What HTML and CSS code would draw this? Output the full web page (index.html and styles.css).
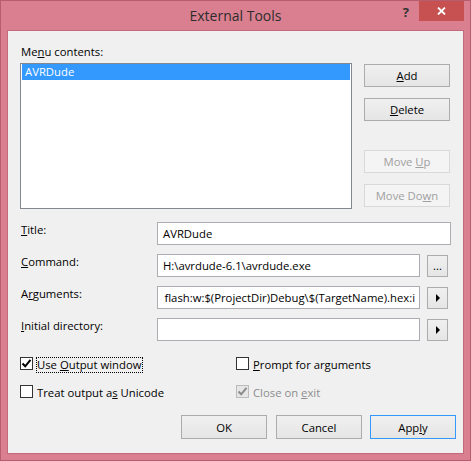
FILE: index.html
```html
<!DOCTYPE html>
<html lang="en">
<head>
  <meta charset="UTF-8">
  <title>External Tools</title>
  <link rel="stylesheet" href="styles.css">
</head>
<body>
  <div class="window">
    <!-- Title bar -->
    <div class="titlebar">
      <span></span>
      <div class="caption">External Tools</div>
      <div class="controls">
        <span class="help">?</span>
        <span class="close">
          <svg width="9" height="8" viewBox="0 0 9 8"><path d="M1 0.5 L8 7.5 M8 0.5 L1 7.5" stroke="#fff" stroke-width="1.8"/></svg>
        </span>
      </div>
    </div>

    <div class="client">
      <div class="list-label">Me<u>n</u>u contents:</div>

      <div class="list-row">
        <div class="listbox">
          <div class="list-item selected">AVRDude</div>
        </div>
        <div class="side-buttons">
          <button class="btn"><u>A</u>dd</button>
          <button class="btn"><u>D</u>elete</button>
          <button class="btn disabled move-up">Move <u>U</u>p</button>
          <button class="btn disabled">Move Do<u>w</u>n</button>
        </div>
      </div>

      <!-- Tool fields -->
      <div class="fields">
        <div class="field">
          <label><u>T</u>itle:</label>
          <div class="textbox wide">AVRDude</div>
        </div>
        <div class="field">
          <label><u>C</u>ommand:</label>
          <div class="textbox">H:\avrdude-6.1\avrdude.exe</div>
          <button class="btn small">...</button>
        </div>
        <div class="field">
          <label>A<u>r</u>guments:</label>
          <div class="textbox scrolled"><span>flash:w:$(ProjectDir)Debug\$(TargetName).hex:i</span></div>
          <button class="btn small"><span class="arrow"></span></button>
        </div>
        <div class="field">
          <label><u>I</u>nitial directory:</label>
          <div class="textbox"></div>
          <button class="btn small"><span class="arrow"></span></button>
        </div>
      </div>

      <!-- Options -->
      <div class="options">
        <div class="check">
          <span class="box"><svg width="11" height="11" viewBox="0 0 11 11"><path d="M1.5 5.5 L4.2 8.3 L9.5 1.8" fill="none" stroke="#000" stroke-width="2"/></svg></span>
          <span class="check-label focused">Use <u>O</u>utput window</span>
        </div>
        <div class="check">
          <span class="box"></span>
          <span class="check-label"><u>P</u>rompt for arguments</span>
        </div>
        <div class="check">
          <span class="box"></span>
          <span class="check-label">Treat output a<u>s</u> Unicode</span>
        </div>
        <div class="check disabled">
          <span class="box"><svg width="11" height="11" viewBox="0 0 11 11"><path d="M1.5 5.5 L4.2 8.3 L9.5 1.8" fill="none" stroke="#8c8c8c" stroke-width="2"/></svg></span>
          <span class="check-label">Close on <u>e</u>xit</span>
        </div>
      </div>

      <div class="actions">
        <button class="btn">OK</button>
        <button class="btn">Cancel</button>
        <button class="btn default">App<u>l</u>y</button>
      </div>
    </div>
  </div>
</body>
</html>
```

FILE: styles.css
```css
body {
  margin: 0;
  font-family: "Open Sans", "Noto Sans", sans-serif;
  font-size: 11.3px;
  color: #000;
}

.window {
  width: 471px;
  height: 461px;
  box-sizing: border-box;
  background-color: #d97f90; /* Pink window frame */
  border: 1px solid #b65d6f;
  display: flex;
  flex-direction: column;
}

/* Title bar */
.titlebar {
  height: 29px;
  display: grid;
  grid-template-columns: 1fr auto 1fr;
  align-items: start;
  padding-right: 6px;
}

.caption {
  font-size: 14px;
  line-height: 29px;
  color: #2d2d2d;
  padding-left: 6px;
}

.controls {
  display: flex;
  justify-content: flex-end;
  align-items: flex-start;
}

.help {
  font-weight: bold;
  font-size: 13px;
  line-height: 20px;
  color: #333;
  margin-right: 10px;
  margin-top: 1px;
}

.close {
  width: 45px;
  height: 20px;
  background-color: #c75050;
  display: flex;
  align-items: center;
  justify-content: center;
}

/* Client area */
.client {
  flex: 1;
  margin: 0 6px 6px;
  border: 1px solid #c4697c;
  background-color: #f0f0f0;
  padding: 13px 7px 0 12px;
}

.list-label {
  line-height: 15px;
  margin-bottom: 4px;
  padding-left: 1px;
}

.list-row {
  display: flex;
}

.listbox {
  width: 332px;
  height: 146px;
  box-sizing: border-box;
  border: 1px solid #828790;
  background-color: #fff;
  padding: 0 1px;
}

.list-item {
  height: 16px;
  line-height: 16px;
  padding-left: 3px;
}

.list-item.selected {
  background-color: #3399ff;
  color: #fff;
}

.side-buttons {
  margin-left: 12px;
  padding-top: 1px;
  display: flex;
  flex-direction: column;
  gap: 11px;
}

.btn {
  width: 86px;
  height: 23px;
  padding: 0;
  font-family: inherit;
  font-size: inherit;
  color: #000;
  border: 1px solid #acacac;
  background: linear-gradient(#f0f0f0, #e5e5e5);
}

.btn.disabled {
  color: #a0a0a0;
  border-color: #d9d9d9;
  background: #f4f4f4;
}

.btn.move-up {
  margin-top: 18px;
}

.btn.default {
  border-color: #3399ff;
}

/* Fields */
.fields {
  margin-top: 13px;
  display: flex;
  flex-direction: column;
  gap: 9px;
}

.field {
  display: flex;
  align-items: flex-start;
}

.field label {
  width: 136px;
  padding-left: 1px;
  line-height: 15px;
}

.textbox {
  width: 263px;
  height: 23px;
  box-sizing: border-box;
  border: 1px solid #abadb3;
  background-color: #fff;
  padding: 0 5px;
  line-height: 21px;
  white-space: nowrap;
  overflow: hidden;
}

.textbox.wide {
  width: 294px;
}

.textbox.scrolled {
  display: flex;
  justify-content: flex-end;
  padding: 0 4px 0 1px;
}

.btn.small {
  width: 21px;
  height: 22px;
  margin: 1px 0 0 7px;
  line-height: 14px;
  display: flex;
  align-items: center;
  justify-content: center;
}

.arrow {
  width: 0;
  height: 0;
  border-top: 4px solid transparent;
  border-bottom: 4px solid transparent;
  border-left: 4px solid #000;
  margin-left: 1px;
}

/* Checkboxes */
.options {
  margin-top: 16px;
  display: grid;
  grid-template-columns: 216px 1fr;
  row-gap: 12px;
}

.check {
  display: flex;
  align-items: flex-start;
  height: 16px;
}

.box {
  width: 13px;
  height: 13px;
  box-sizing: border-box;
  border: 1px solid #333;
  background-color: #fff;
  display: flex;
  align-items: center;
  justify-content: center;
}

.check-label {
  margin-left: 3px;
  border: 1px dotted transparent;
  line-height: 14px;
  padding-right: 1px;
}

.check-label.focused {
  border-color: #000;
}

.check.disabled .box {
  border-color: #bcbcbc;
  background-color: #e6e6e6;
}

.check.disabled .check-label {
  color: #8d8d8d;
}

/* Dialog buttons */
.actions {
  margin-top: 14px;
  display: flex;
  justify-content: flex-end;
  gap: 8px;
}

.actions .btn {
  height: 24px;
}

.actions .btn:first-child {
  margin-right: 1px;
}
```
